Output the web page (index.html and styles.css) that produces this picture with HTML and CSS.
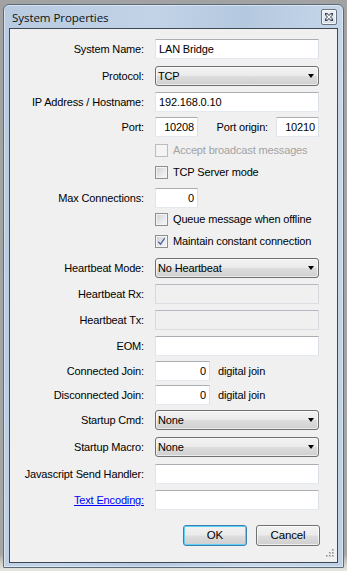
FILE: index.html
```html
<!DOCTYPE html>
<html>
<head>
<meta charset="utf-8">
<link rel="stylesheet" href="styles.css">
</head>
<body>
<div class="desktop">
  <div class="window">
    <div class="titlebar">
      <span class="title">System Properties</span>
      <div class="close">
        <svg width="8" height="8" viewBox="0 0 8 8"><path d="M1 1 L7 7 M7 1 L1 7" stroke="#3a4452" stroke-width="3" stroke-linecap="square"/><path d="M1.5 1.5 L6.5 6.5 M6.5 1.5 L1.5 6.5" stroke="#ffffff" stroke-width="1.3"/></svg>
      </div>
    </div>
    <div class="client">
      <div class="row s27"><div class="lbl">System Name:</div><div class="tb">LAN Bridge</div></div>
      <div class="row s26"><div class="lbl">Protocol:</div><div class="sel"><span>TCP</span><i class="arrow"></i></div></div>
      <div class="row s25"><div class="lbl">IP Address / Hostname:</div><div class="tb">192.168.0.10</div></div>
      <div class="row s23"><div class="lbl">Port:</div><div class="tb num w43">10208</div><div class="lbl2">Port origin:</div><div class="tb num w43">10210</div></div>
      <div class="row s22"><div class="lbl"></div><div class="cb dis"></div><span class="cbt dtext">Accept broadcast messages</span></div>
      <div class="row s26"><div class="lbl"></div><div class="cb"></div><span class="cbt">TCP Server mode</span></div>
      <div class="row s21"><div class="lbl">Max Connections:</div><div class="tb num w43">0</div></div>
      <div class="row s22"><div class="lbl"></div><div class="cb"></div><span class="cbt">Queue message when offline</span></div>
      <div class="row s27"><div class="lbl"></div><div class="cb"><svg width="9" height="9" viewBox="0 0 9 9"><path d="M1.3 4.8 L3.5 7.2 L7.7 1.2" fill="none" stroke="#4d64a0" stroke-width="1.3"/></svg></div><span class="cbt">Maintain constant connection</span></div>
      <div class="row s26"><div class="lbl">Heartbeat Mode:</div><div class="sel"><span>No Heartbeat</span><i class="arrow"></i></div></div>
      <div class="row s26"><div class="lbl">Heartbeat Rx:</div><div class="tb off"></div></div>
      <div class="row s26"><div class="lbl">Heartbeat Tx:</div><div class="tb off"></div></div>
      <div class="row s25"><div class="lbl">EOM:</div><div class="tb"></div></div>
      <div class="row s24"><div class="lbl">Connected Join:</div><div class="tb num w55">0</div><span class="after">digital join</span></div>
      <div class="row s25"><div class="lbl">Disconnected Join:</div><div class="tb num w55">0</div><span class="after">digital join</span></div>
      <div class="row s27"><div class="lbl">Startup Cmd:</div><div class="sel"><span>None</span><i class="arrow"></i></div></div>
      <div class="row s27"><div class="lbl">Startup Macro:</div><div class="sel"><span>None</span><i class="arrow"></i></div></div>
      <div class="row s26"><div class="lbl">Javascript Send Handler:</div><div class="tb"></div></div>
      <div class="row s35"><div class="lbl"><span class="link">Text Encoding:</span></div><div class="tb"></div></div>
      <div class="buttons">
        <div class="btn def">OK</div>
        <div class="btn">Cancel</div>
      </div>
      <svg class="grip" width="12" height="12" viewBox="0 0 12 12">
        <g fill="#c4c4c4">
          <rect x="9" y="1" width="2" height="2"/>
          <rect x="6" y="4" width="2" height="2"/><rect x="9" y="4" width="2" height="2"/>
          <rect x="3" y="7" width="2" height="2"/><rect x="6" y="7" width="2" height="2"/><rect x="9" y="7" width="2" height="2"/>
        </g>
        <g fill="#8a8a8a">
          <rect x="9" y="1" width="1" height="1"/>
          <rect x="6" y="4" width="1" height="1"/><rect x="9" y="4" width="1" height="1"/>
          <rect x="3" y="7" width="1" height="1"/><rect x="6" y="7" width="1" height="1"/><rect x="9" y="7" width="1" height="1"/>
        </g>
      </svg>
    </div>
  </div>
</div>
</body>
</html>
```
FILE: styles.css
```css
html, body {
  margin: 0;
  padding: 0;
}
body {
  width: 347px;
  height: 571px;
  overflow: hidden;
  font-family: "Liberation Sans", Arial, sans-serif;
  font-size: 11px;
  letter-spacing: -0.15px;
  color: #000;
}
.desktop {
  width: 347px;
  height: 571px;
  box-sizing: border-box;
  padding: 4px 3px 0 3px;
  background: linear-gradient(to bottom, #a2a2a2 0%, #a6a6a6 97%, #d8d6d0 99%, #e8e6e0 100%);
}
.window {
  width: 341px;
  height: 564px;
  box-sizing: border-box;
  border: 1px solid #5c6b7c;
  border-radius: 6px 6px 1px 1px;
  padding: 0 5px 4px 5px;
  background: linear-gradient(100deg, #b7cae0 0%, #c2d3e7 35%, #b4c8df 55%, #c8d8ea 80%, #bdd0e5 100%);
  display: flex;
  flex-direction: column;
  box-shadow: inset 0 0 0 1px rgba(255,255,255,0.45);
}
.titlebar {
  height: 23px;
  flex: none;
  display: flex;
  align-items: center;
  justify-content: space-between;
  padding: 0 1px 0 3px;
}
.title {
  font-family: "Open Sans", "Noto Sans", sans-serif;
  font-size: 11.6px;
  color: #111;
  margin-top: 2px;
  letter-spacing: -0.1px;
}
.close {
  width: 16px;
  height: 16px;
  box-sizing: border-box;
  border: 1px solid #6a7584;
  border-radius: 2px;
  background: linear-gradient(to bottom, #eef2f7, #d3dce7);
  box-shadow: inset 0 0 0 1px rgba(255,255,255,0.7);
  display: flex;
  align-items: center;
  justify-content: center;
  margin-top: 1px;
}
.client {
  position: relative;
  flex: 1;
  border: 1px solid #3d4756;
  background: #f0f0f0;
  padding-top: 10px;
  box-sizing: border-box;
}
.row {
  display: flex;
  align-items: flex-start;
}
.row > * { flex: none; }
.s21 { height: 21px; }
.s22 { height: 22px; }
.s23 { height: 23px; }
.s24 { height: 24px; }
.s25 { height: 25px; }
.s26 { height: 26px; }
.s27 { height: 27px; }
.s35 { height: 35px; }
.lbl {
  width: 134px;
  margin-right: 11px;
  text-align: right;
  line-height: 20px;
  height: 20px;
  white-space: nowrap;
}
.lbl2 {
  width: 70px;
  margin-right: 8px;
  text-align: right;
  line-height: 20px;
  white-space: nowrap;
}
.tb {
  width: 164px;
  height: 20px;
  box-sizing: border-box;
  border: 1px solid;
  border-color: #abadb3 #dbdfe6 #e3e9ef #e2e3ea;
  border-radius: 1px;
  background: #fff;
  line-height: 18px;
  padding: 0 3px;
  white-space: nowrap;
}
.tb.num { text-align: right; }
.tb.w43 { width: 43px; }
.tb.w55 { width: 55px; }
.tb.off {
  background: #f0f0f0;
  border-color: #b5b8be #d5d8dd #dadde2 #d5d8dd;
}
.after {
  margin-left: 8px;
  line-height: 20px;
}
.sel {
  width: 164px;
  height: 20px;
  box-sizing: border-box;
  border: 1px solid #707070;
  border-radius: 3px;
  background: linear-gradient(to bottom, #f2f2f2 0%, #ebebeb 48%, #dddddd 52%, #cfcfcf 100%);
  box-shadow: inset 0 0 0 1px rgba(255,255,255,0.6);
  display: flex;
  align-items: center;
  justify-content: space-between;
  padding: 0 4px 0 2px;
  line-height: 18px;
}
.arrow {
  width: 0;
  height: 0;
  border-left: 3.5px solid transparent;
  border-right: 3.5px solid transparent;
  border-top: 4px solid #000;
}
.cb {
  width: 13px;
  height: 13px;
  box-sizing: border-box;
  border: 1px solid #8e8f8f;
  background: linear-gradient(135deg, #cdd0d4 0%, #e9eaeb 60%, #f7f7f7 100%);
  box-shadow: inset 0 0 0 1px #f4f4f4;
  margin-top: 4px;
  display: flex;
  align-items: center;
  justify-content: center;
}
.cb.dis {
  border-color: #bcbcbc;
  background: #f4f4f4;
}
.cbt {
  margin-left: 5px;
  line-height: 20px;
}
.dtext { color: #a3a3a3; }
.link {
  color: #0000ff;
  text-decoration: underline;
}
.buttons {
  display: flex;
  justify-content: flex-end;
  gap: 9px;
  padding-right: 17px;
}
.btn {
  width: 64px;
  height: 21px;
  box-sizing: border-box;
  border: 1px solid #707070;
  border-radius: 3px;
  background: linear-gradient(to bottom, #f2f2f2 0%, #ebebeb 48%, #dddddd 52%, #cfcfcf 100%);
  box-shadow: inset 0 0 0 1px rgba(255,255,255,0.7);
  text-align: center;
  line-height: 19px;
  font-size: 11.5px;
}
.btn.def {
  border-color: #3c7fb1;
  box-shadow: inset 0 0 0 1px #5fd0f5;
}
.grip {
  position: absolute;
  right: 2px;
  bottom: 2px;
}
```
